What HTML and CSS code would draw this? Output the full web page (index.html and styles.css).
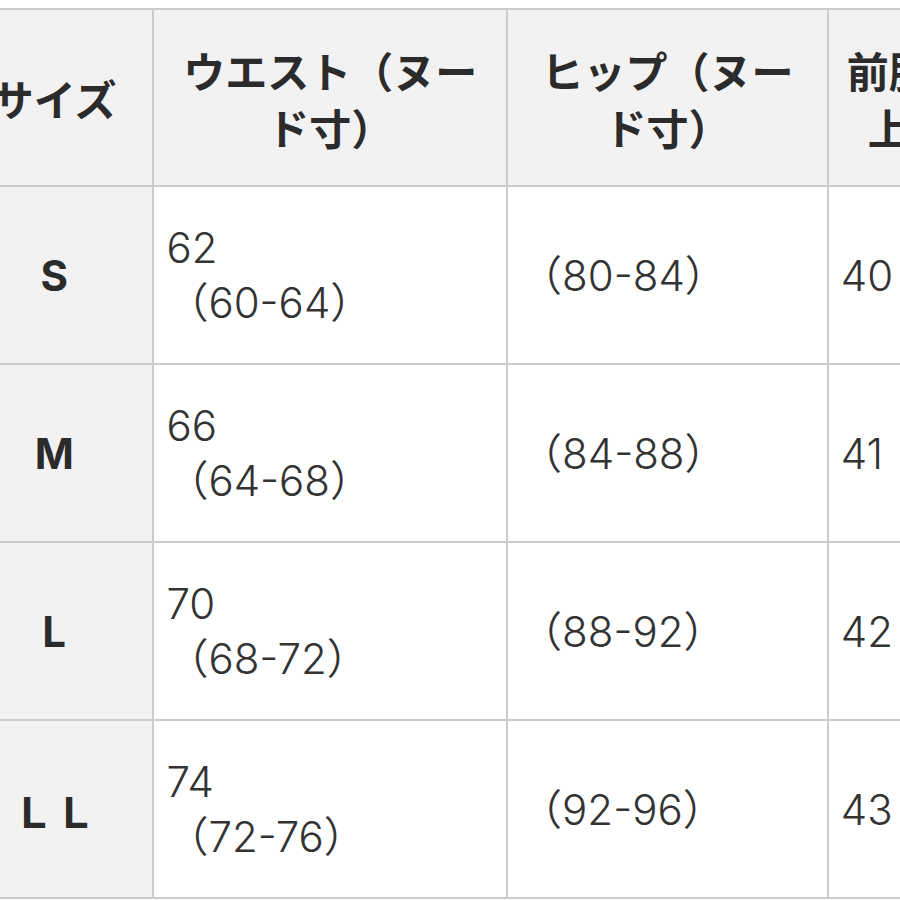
FILE: index.html
```html
<!DOCTYPE html>
<html lang="ja">
<head>
<meta charset="utf-8">
<title>サイズ表</title>
<link rel="stylesheet" href="styles.css">
</head>
<body>
<table class="size-table">
  <thead>
    <tr>
      <th class="c-size">サイズ</th>
      <th class="c-waist">ウエスト（ヌード寸）</th>
      <th class="c-hip">ヒップ（ヌード寸）</th>
      <th class="c-rise">前股上</th>
    </tr>
  </thead>
  <tbody>
    <tr>
      <th class="row-head">S</th>
      <td>62<br>（60-64）</td>
      <td>（80-84）</td>
      <td>40</td>
    </tr>
    <tr>
      <th class="row-head">M</th>
      <td>66<br>（64-68）</td>
      <td>（84-88）</td>
      <td>41</td>
    </tr>
    <tr>
      <th class="row-head">L</th>
      <td>70<br>（68-72）</td>
      <td>（88-92）</td>
      <td>42</td>
    </tr>
    <tr>
      <th class="row-head">ＬＬ</th>
      <td>74<br>（72-76）</td>
      <td>（92-96）</td>
      <td>43</td>
    </tr>
  </tbody>
</table>
</body>
</html>
```

FILE: styles.css
```css
html, body {
  margin: 0;
  padding: 0;
  background: #ffffff;
  overflow: hidden;
}

body {
  width: 900px;
  height: 900px;
  font-family: "Noto Sans CJK JP", "Noto Sans", sans-serif;
  color: #333333;
}

.size-table {
  table-layout: fixed;
  border-collapse: separate;
  border-spacing: 2px;
  background: #cccccc;
  margin: 8px 0 0 -46px;
  width: 997px;
}

.size-table th,
.size-table td {
  box-sizing: border-box;
  vertical-align: middle;
  font-size: 42px;
}

.size-table thead th {
  background: #f2f2f2;
  height: 175px;
  padding: 0 16px;
  font-weight: bold;
  line-height: 57px;
  text-align: center;
  color: #2b2b2b;
}

.c-size { width: 196px; }
.c-waist { width: 351px; }
.c-hip { width: 318px; }
.c-rise { width: 120px; }

.size-table tbody th.row-head {
  background: #f2f2f2;
  font-family: "Inter", "Noto Sans CJK JP", sans-serif;
  font-weight: bold;
  text-align: center;
  color: #2b2b2b;
  padding: 0;
}

.size-table tbody td {
  background: #ffffff;
  height: 176px;
  padding: 0 12px;
  font-family: "Inter", "Noto Sans CJK JP", sans-serif;
  line-height: 55px;
  text-align: left;
  font-weight: 350;
  white-space: nowrap;
  color: #333333;
}
```
